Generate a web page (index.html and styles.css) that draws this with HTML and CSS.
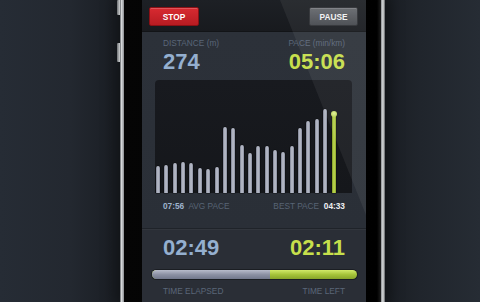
FILE: index.html
```html
<!DOCTYPE html>
<html>
<head>
<meta charset="utf-8">
<link rel="stylesheet" href="styles.css">
</head>
<body>
<div class="phone">
  <div class="screen">
    <div class="topbar">
      <div class="btn stop">STOP</div>
      <div class="btn pause">PAUSE</div>
    </div>
    <div class="main">
      <div class="row labels"><span>DISTANCE (m)</span><span>PACE (min/km)</span></div>
      <div class="row big"><span class="blue">274</span><span class="lime">05:06</span></div>
      <div class="chart">
        <div class="bar" style="height:27px"></div>
        <div class="bar" style="height:28px"></div>
        <div class="bar" style="height:30px"></div>
        <div class="bar" style="height:31px"></div>
        <div class="bar" style="height:30px"></div>
        <div class="bar" style="height:25px"></div>
        <div class="bar" style="height:24px"></div>
        <div class="bar" style="height:26px"></div>
        <div class="bar" style="height:66px"></div>
        <div class="bar" style="height:65px"></div>
        <div class="bar" style="height:48px"></div>
        <div class="bar" style="height:40px"></div>
        <div class="bar" style="height:47px"></div>
        <div class="bar" style="height:47px"></div>
        <div class="bar" style="height:43px"></div>
        <div class="bar" style="height:41px"></div>
        <div class="bar" style="height:47px"></div>
        <div class="bar" style="height:65px"></div>
        <div class="bar" style="height:72px"></div>
        <div class="bar" style="height:74px"></div>
        <div class="bar" style="height:84px"></div>
        <div class="bar current" style="height:79px"></div>
      </div>
      <div class="row info"><span><b class="avg">07:56</b>&nbsp; AVG PACE</span><span>BEST PACE&nbsp; <b class="best">04:33</b></span></div>
    </div>
    <div class="timer">
      <div class="row big"><span class="blue">02:49</span><span class="lime">02:11</span></div>
      <div class="progress"><div class="elapsed" style="width:57.5%"></div></div>
      <div class="row labels bottom"><span>TIME ELAPSED</span><span>TIME LEFT</span></div>
    </div>
    <div class="glare"></div>
  </div>
</div>
</body>
</html>
```

FILE: styles.css
```css
* { box-sizing: border-box; }
html, body { margin: 0; padding: 0; }
body {
  width: 480px;
  height: 302px;
  overflow: hidden;
  font-family: "Liberation Sans", Arial, sans-serif;
  background: linear-gradient(to right, #262c35 0px, #232830 70px, #1b1f25 112px, #1b1f25 390px, #20252c 420px, #262c34 480px);
}
.phone {
  position: relative;
  margin-left: 120px;
  width: 265px;
  height: 302px;
  padding: 0 19px 0 22px;
  background: linear-gradient(to right,
    #5a5d60 0px, #d6d8da 1.5px, #9a9c9f 3.5px, #050505 4.5px,
    #000 calc(100% - 8px), #1a1a1a calc(100% - 4.5px),
    #9fa2a5 calc(100% - 3.5px), #dcdedf calc(100% - 2px), #5a5d60 100%);
  box-shadow: 0 0 14px 4px rgba(0,0,0,0.45);
}
.phone::before, .phone::after {
  content: "";
  position: absolute;
  left: -3px;
  width: 3px;
  border-radius: 1px 0 0 1px;
  background: linear-gradient(to right, #6d7073, #d0d2d4);
}
.phone::before { top: 0; height: 15px; }
.phone::after { top: 43px; height: 19px; }
.screen {
  position: relative;
  width: 224px;
  height: 302px;
  overflow: hidden;
  background: #2a2f37;
}
.topbar {
  height: 32px;
  display: flex;
  justify-content: space-between;
  align-items: flex-start;
  padding: 7px 8px 0 7px;
  background: linear-gradient(#1d2025, #181a1e);
  border-bottom: 1px solid #121417;
}
.btn {
  height: 19px;
  border-radius: 2px;
  display: flex;
  align-items: center;
  justify-content: center;
  font-weight: bold;
  font-size: 8.3px;
  color: #fff;
}
.stop {
  width: 50px;
  background: linear-gradient(#d82a31, #b81c22);
  border: 1px solid #8a1015;
  box-shadow: inset 0 1px 0 rgba(255,255,255,0.2);
}
.pause {
  width: 49px;
  background: linear-gradient(#64676c, #45484d);
  border: 1px solid #2c2e32;
  box-shadow: inset 0 1px 0 rgba(255,255,255,0.15);
  color: #f2f2f2;
}
.main {
  padding-top: 6px;
  padding-bottom: 17px;
  background: linear-gradient(#2c3139, #2a2f37);
}
.row {
  display: flex;
  justify-content: space-between;
  padding: 0 21px;
}
.labels {
  font-size: 8.3px;
  line-height: 10px;
  color: #5a6678;
}
.big {
  margin-top: 3px;
  font-size: 22px;
  line-height: 22px;
  font-weight: bold;
}
.blue { color: #94afcf; }
.lime { color: #c6df4c; }
.chart {
  margin: 7px 14px 0 13px;
  height: 113px;
  border-radius: 4px 4px 0 0;
  background: linear-gradient(#181a1f, #15171b);
  display: flex;
  align-items: flex-end;
  gap: 4.37px;
  padding-left: 1px;
}
.bar {
  width: 4px;
  flex: none;
  border-radius: 2px 2px 0 0;
  background: linear-gradient(to right, #7c8192, #bfc3cf 50%, #868b9c);
  box-shadow: 0 0 0 0.5px rgba(0,0,0,0.5);
}
.bar.current {
  position: relative;
  background: linear-gradient(to right, #7f9a26, #c2dc52 50%, #8aa52c);
}
.bar.current::before {
  content: "";
  position: absolute;
  top: -3px;
  left: -1px;
  width: 6px;
  height: 6px;
  border-radius: 50%;
  background: radial-gradient(circle at 50% 40%, #e4f39a, #a8c63a);
}
.info {
  margin-top: 8px;
  font-size: 8.3px;
  line-height: 10px;
  color: #586475;
}
.avg { color: #9db2cc; }
.best { color: #eef0f2; }
.timer {
  border-top: 1px solid #1f2329;
  box-shadow: inset 0 1px 0 rgba(255,255,255,0.04);
  padding-top: 8px;
  background: #2a2e36;
  height: 74px;
}
.timer .big { margin-top: 0; }
.progress {
  margin: 11px 9px 0 10px;
  height: 9px;
  border-radius: 5px;
  overflow: hidden;
  background: linear-gradient(#d2ea6a, #a6c43a 50%, #87a42a);
  box-shadow: 0 0 0 1px rgba(0,0,0,0.35);
}
.elapsed {
  height: 100%;
  background: linear-gradient(#b8bccb, #8d92a4 50%, #72788c);
}
.bottom { margin-top: 7px; }
.glare {
  position: absolute;
  inset: 0;
  background: rgba(255,255,255,0.06);
  clip-path: polygon(138px 0, 100% 0, 100% 215px);
  pointer-events: none;
}
```
